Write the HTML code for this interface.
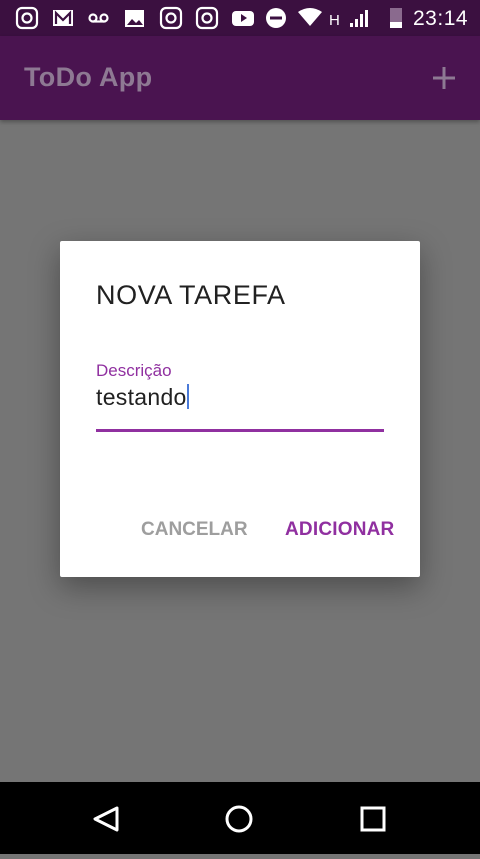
<!DOCTYPE html>
<html><head><style>
body{margin:0;width:480px;height:854px;position:relative;overflow:hidden;background:#757575;font-family:"Liberation Sans",sans-serif}
.sb{position:absolute;top:0;left:0;width:480px;height:36px;background:#3b1040;color:#fff}
.ab{position:absolute;top:36px;left:0;width:480px;height:84px;background:#4a1450;box-shadow:0 2px 4px rgba(0,0,0,.3)}
.nav{position:absolute;top:782px;left:0;width:480px;height:72px;background:#000}
.dlg{position:absolute;left:60px;top:241px;width:360px;height:336px;background:#fff;border-radius:2px;box-shadow:0 10px 30px rgba(0,0,0,.35)}
.t{position:absolute;white-space:nowrap}
</style></head><body>
<div class="sb">
<svg width="480" height="36" style="position:absolute;left:0;top:0" fill="none" stroke="#fff" stroke-width="2.2">
<rect x="17" y="8" width="20" height="20" rx="5"/><circle cx="27" cy="18" r="4.5"/>
<rect x="53" y="10" width="20" height="16" fill="#fff" stroke="none"/><path d="M56 24V13l7 7 7-7v11" stroke="#3b1040"/>
<circle cx="93" cy="18" r="3.5"/><circle cx="104" cy="18" r="3.5"/><path d="M93 21.5h11"/>
<rect x="125" y="10" width="19" height="17" fill="#fff" stroke="none"/><path d="M127 25l5-6 4 4 3-3 4 5z" fill="#3b1040" stroke="none"/>
<rect x="161" y="8" width="20" height="20" rx="5"/><circle cx="171" cy="18" r="4.5"/>
<rect x="197" y="8" width="20" height="20" rx="5"/><circle cx="207" cy="18" r="4.5"/>
<rect x="232" y="11" width="22" height="15" rx="4" fill="#fff" stroke="none"/><path d="M241 14v8l6-4z" fill="#3b1040" stroke="none"/>
<circle cx="276" cy="18" r="10" fill="#fff" stroke="none"/><path d="M270 18h12" stroke="#3b1040" stroke-width="3"/>
<path d="M298 12q12-8 24 0l-12 14z" fill="#fff" stroke="none"/>
<rect x="350" y="23" width="3" height="4" fill="#fff" stroke="none"/><rect x="355" y="19" width="3" height="8" fill="#fff" stroke="none"/><rect x="360" y="14" width="3" height="13" fill="#fff" stroke="none"/><rect x="365" y="10" width="3" height="17" fill="#fff" stroke="none"/>
<rect x="390" y="8" width="12" height="20" fill="#8a6a8e" stroke="none"/><rect x="390" y="22" width="12" height="6" fill="#fff" stroke="none"/>
</svg>
<div class="t" style="left:329px;top:12px;font-size:15px">H</div>
<div class="t" style="left:413px;top:7px;font-size:21px;letter-spacing:0.5px">23:14</div>
</div>
<div class="ab">
<div class="t" style="left:24px;top:26px;font-size:27px;font-weight:bold;color:#8e7993;letter-spacing:0.3px">ToDo App</div>
<svg width="24" height="24" style="position:absolute;left:432px;top:30px"><path d="M12 1v22M1 12h22" stroke="#8e7993" stroke-width="3"/></svg>
</div>
<div class="dlg">
<div class="t" style="left:36px;top:39px;font-size:27px;color:#212121;letter-spacing:0.6px">NOVA TAREFA</div>
<div class="t" style="left:36px;top:120px;font-size:17px;color:#9030a0">Descrição</div>
<div class="t" style="left:36px;top:143px;font-size:23px;color:#212121;letter-spacing:0.3px">testando<span style="display:inline-block;width:2px;height:25px;background:#4a7ad8;vertical-align:-4px"></span></div>
<div class="t" style="left:36px;top:188px;width:288px;height:3px;background:#9030a0"></div>
<div class="t" style="left:81px;top:278px;font-size:19px;font-weight:bold;color:#9e9e9e">CANCELAR</div>
<div class="t" style="left:225px;top:278px;font-size:19px;font-weight:bold;color:#9030a0;letter-spacing:0.2px">ADICIONAR</div>
</div>
<div class="nav">
<svg width="480" height="72" fill="none" stroke="#fff" stroke-width="3">
<path d="M117 26L95 37l22 11z" stroke-linejoin="round"/>
<circle cx="239" cy="37" r="12"/>
<rect x="362" y="26" width="22" height="22"/>
</svg>
</div>
</body></html>
